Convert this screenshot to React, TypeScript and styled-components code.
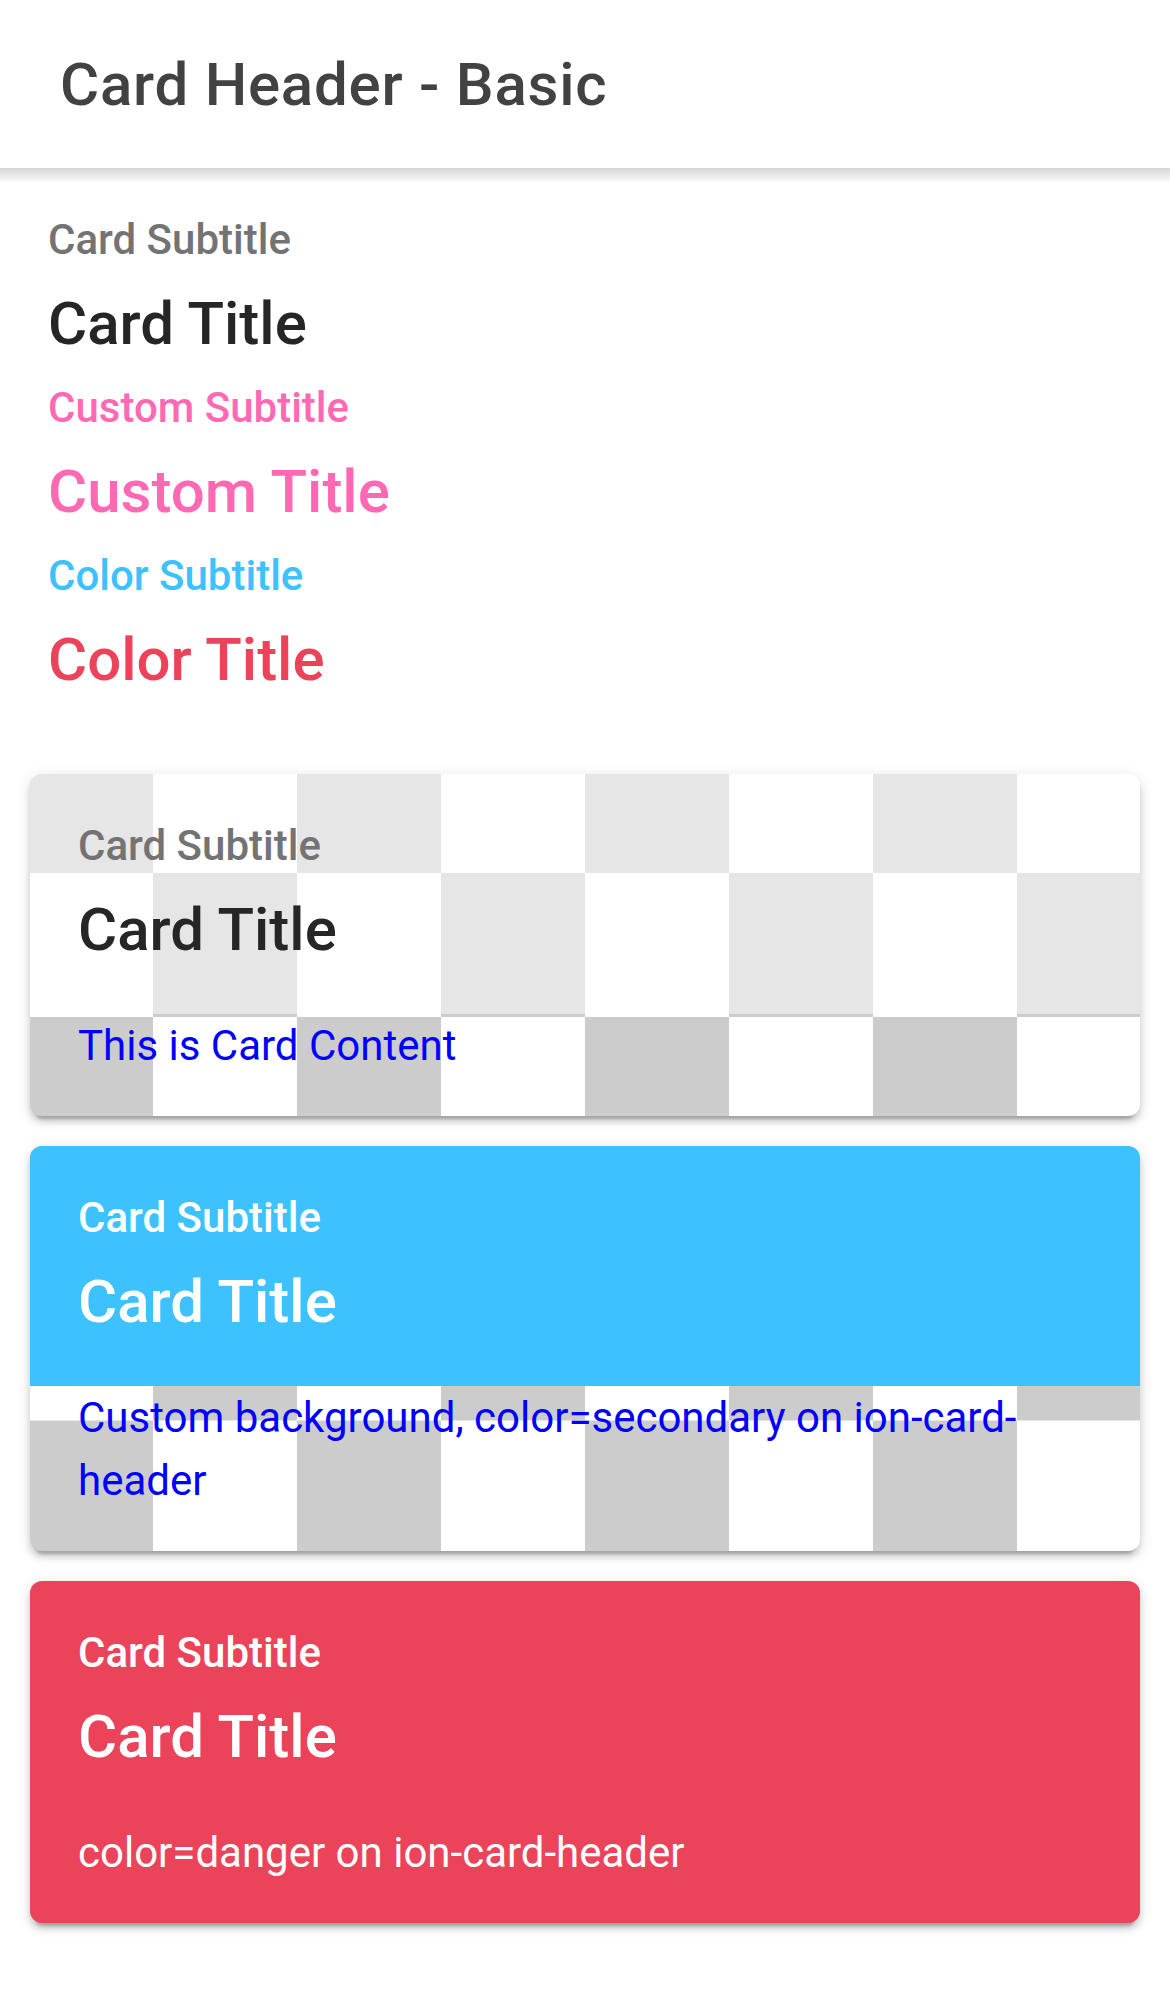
import React from "react";
import styled, { createGlobalStyle } from "styled-components";

const GlobalStyle = createGlobalStyle`
  html, body {
    margin: 0;
    padding: 0;
    background: #ffffff;
  }
  body {
    font-family: Roboto, "Noto Sans", "Liberation Sans", sans-serif;
    -webkit-font-smoothing: antialiased;
  }
  *, *::before, *::after {
    box-sizing: border-box;
  }
`;

const Page = styled.div`
  width: 1170px;
  min-height: 1992px;
  background: #ffffff;
  display: flex;
  flex-direction: column;
`;

const Toolbar = styled.header`
  position: relative;
  z-index: 2;
  height: 168px;
  display: flex;
  align-items: center;
  padding: 0 60px;
  background: #ffffff;

  &::after {
    content: "";
    position: absolute;
    left: 0;
    right: 0;
    top: 100%;
    height: 15px;
    background: linear-gradient(rgba(0, 0, 0, 0.17), rgba(0, 0, 0, 0));
  }
`;

const ToolbarTitle = styled.h1`
  margin: 0;
  font-size: 60px;
  font-weight: 500;
  letter-spacing: 0.0125em;
  line-height: normal;
  color: #424242;
`;

const Content = styled.main`
  display: flex;
  flex-direction: column;
`;

const CardHeader = styled.div<{ $bg?: string }>`
  display: flex;
  flex-direction: column;
  padding: 48px;
  background: ${(p) => p.$bg ?? "transparent"};
`;

const Subtitle = styled.h3<{ $color: string }>`
  margin: 0;
  font-size: 42px;
  font-weight: 500;
  line-height: 48px;
  color: ${(p) => p.$color};

  &:not(:first-child) {
    margin-top: 24px;
  }
`;

const Title = styled.h2<{ $color: string }>`
  margin: 0;
  font-size: 60px;
  font-weight: 500;
  line-height: 1.2;
  color: ${(p) => p.$color};

  &:not(:first-child) {
    margin-top: 24px;
  }
`;

const CardList = styled.div`
  display: flex;
  flex-direction: column;
  gap: 30px;
  padding: 30px;
`;

const Card = styled.section<{ $fill?: string }>`
  border-radius: 12px;
  overflow: hidden;
  box-shadow: 0 9px 3px -6px rgba(0, 0, 0, 0.2), 0 6px 6px 0 rgba(0, 0, 0, 0.14),
    0 3px 15px 0 rgba(0, 0, 0, 0.12);
  background-color: ${(p) => p.$fill ?? "#ffffff"};
  background-image: ${(p) =>
    p.$fill
      ? "none"
      : "conic-gradient(#ffffff 25%, #cccccc 0 50%, #ffffff 0 75%, #cccccc 0)"};
  background-size: 288px 288px;
  background-position: 50% calc(50% + 72px);
`;

const CardContent = styled.div<{ $color: string }>`
  padding: 0 48px 39px;
  font-size: 42px;
  line-height: 1.5;
  font-weight: 400;
  color: ${(p) => p.$color};
`;

const GRAY_SUB = "#737373";
const DARK_TITLE = "#262626";
const PINK = "#ff69b4";
const SECONDARY = "#3dc2ff";
const DANGER = "#eb445a";
const WHITE = "#ffffff";
const BLUE = "#0000ff";

export default function App() {
  return (
    <Page>
      <GlobalStyle />
      <Toolbar>
        <ToolbarTitle>Card Header - Basic</ToolbarTitle>
      </Toolbar>
      <Content>
        <CardHeader>
          <Subtitle $color={GRAY_SUB}>Card Subtitle</Subtitle>
          <Title $color={DARK_TITLE}>Card Title</Title>
          <Subtitle $color={PINK}>Custom Subtitle</Subtitle>
          <Title $color={PINK}>Custom Title</Title>
          <Subtitle $color={SECONDARY}>Color Subtitle</Subtitle>
          <Title $color={DANGER}>Color Title</Title>
        </CardHeader>

        <CardList>
          <Card>
            <CardHeader $bg="rgba(255, 255, 255, 0.5)">
              <Subtitle $color={GRAY_SUB}>Card Subtitle</Subtitle>
              <Title $color={DARK_TITLE}>Card Title</Title>
            </CardHeader>
            <CardContent $color={BLUE}>This is Card Content</CardContent>
          </Card>

          <Card>
            <CardHeader $bg={SECONDARY}>
              <Subtitle $color={WHITE}>Card Subtitle</Subtitle>
              <Title $color={WHITE}>Card Title</Title>
            </CardHeader>
            <CardContent $color={BLUE}>
              Custom background, color=secondary on ion-card-header
            </CardContent>
          </Card>

          <Card $fill={DANGER}>
            <CardHeader>
              <Subtitle $color={WHITE}>Card Subtitle</Subtitle>
              <Title $color={WHITE}>Card Title</Title>
            </CardHeader>
            <CardContent $color={WHITE}>color=danger on ion-card-header</CardContent>
          </Card>
        </CardList>
      </Content>
    </Page>
  );
}
